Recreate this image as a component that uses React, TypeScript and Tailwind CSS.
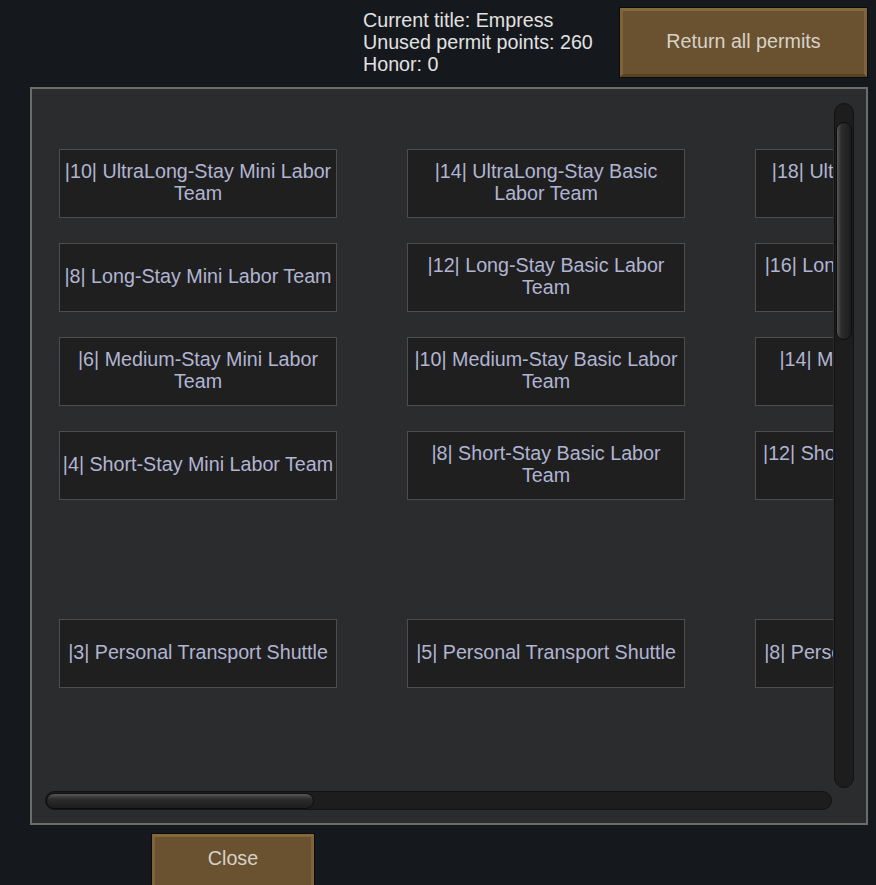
const rows: string[][] = [
  ["|10| UltraLong-Stay Mini Labor Team", "|14| UltraLong-Stay Basic Labor Team", "|18| UltraLong-Stay Medium Labor Team"],
  ["|8| Long-Stay Mini Labor Team", "|12| Long-Stay Basic Labor Team", "|16| Long-Stay Medium Labor Team"],
  ["|6| Medium-Stay Mini Labor Team", "|10| Medium-Stay Basic Labor Team", "|14| Medium-Stay Medium Labor Team"],
  ["|4| Short-Stay Mini Labor Team", "|8| Short-Stay Basic Labor Team", "|12| Short-Stay Medium Labor Team"],
  [],
  ["|3| Personal Transport Shuttle", "|5| Personal Transport Shuttle", "|8| Personal Transport Shuttle"],
];

function BrownButton({ label, className, inner }: { label: string; className: string; inner: string }) {
  return (
    <button className={`flex shrink-0 border border-[#0b0b0b] bg-[#0b0b0b] ${className}`}>
      <span
        className={`flex h-full w-full justify-center border-[3px] border-t-[#86693b] border-l-[#7f633a] border-r-[#7f633a] border-b-[#56421f] bg-[#6a5230] text-[19.7px] leading-[22px] text-[#d8d1c8] ${inner}`}
      >
        {label}
      </span>
    </button>
  );
}

export default function App() {
  return (
    <div className="h-[885px] w-full overflow-hidden bg-[#15181c] font-['Liberation_Sans',Arial,sans-serif]">
      {/* header */}
      <div className="flex h-[87px]">
        <div className="ml-[363px] w-[256px] pt-[9px] text-[19.7px] leading-[22px] text-[#e2e2e2]">
          <div>Current title: Empress</div>
          <div>Unused permit points: 260</div>
          <div>Honor: 0</div>
        </div>
        <BrownButton
          label="Return all permits"
          className="mt-[7px] h-[71px] w-[249px]"
          inner="items-center pb-[3px]"
        />
      </div>

      {/* main panel */}
      <div className="ml-[30px] flex w-[838px] flex-col border-2 border-[#6c6c6c] bg-[#2b2c2e] pb-[13px]">
        <div className="flex h-[699px]">
          <div className="w-[801px] overflow-hidden pl-[27px] pt-[60px]">
            <div className="flex flex-col gap-[25px]">
              {rows.map((row, i) => (
                <div key={i} className="flex h-[69px] gap-[70px]">
                  {row.map((label, j) => (
                    <div
                      key={j}
                      className="flex h-[69px] w-[278px] shrink-0 items-center justify-center border border-[#4d4d4d] bg-[#1f1f20] pb-[3px] text-center text-[19.7px] leading-[22px] text-[#b1b5d2]"
                    >
                      {label}
                    </div>
                  ))}
                </div>
              ))}
            </div>
          </div>
          {/* vertical scrollbar */}
          <div className="ml-[1px] mt-[14px] flex h-[685px] w-[20px] justify-center rounded-full border border-[#121212] bg-[#1c1d1c]">
            <div className="mt-[18px] h-[218px] w-[16px] rounded-full border border-[#0e0e0e] bg-[linear-gradient(90deg,#575757_0%,#2c2c2c_30%,#1d1d1d_100%)]" />
          </div>
        </div>
        {/* horizontal scrollbar */}
        <div className="ml-[13px] mt-[3px] flex h-[19px] w-[787px] items-center rounded-full border border-[#121212] bg-[#1c1d1c]">
          <div className="h-[16px] w-[268px] rounded-full border border-[#0e0e0e] bg-[linear-gradient(180deg,#595959_0%,#2c2c2c_35%,#1d1d1d_100%)]" />
        </div>
      </div>

      <BrownButton label="Close" className="ml-[151px] mt-[8px] h-[64px] w-[164px]" inner="pt-[10px]" />
    </div>
  );
}
